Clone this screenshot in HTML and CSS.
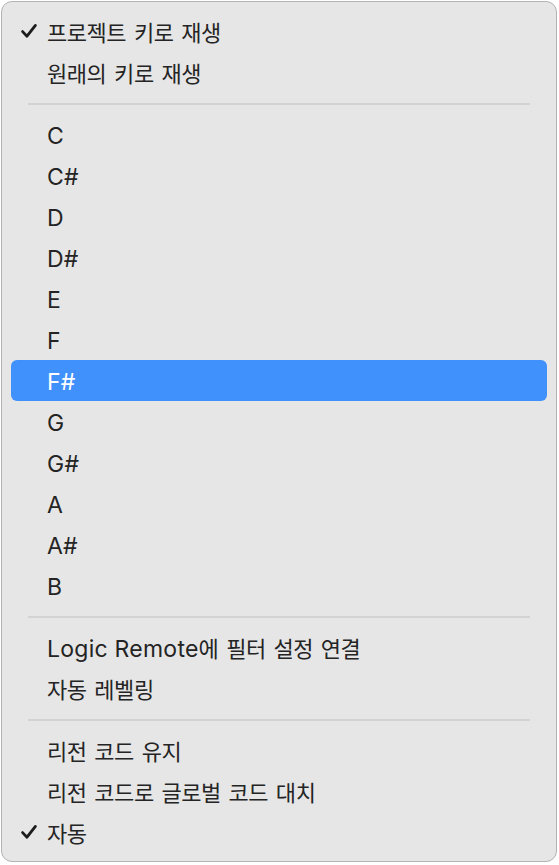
FILE: index.html
```html
<html>
<head>
  <title>키 메뉴</title>
  <link rel="stylesheet" href="styles.css">
</head>
<body>

<div id="menu">
  <div class="item checked">
    <svg class="check" viewBox="0 0 16 14"><path d="M1.6 7.6 L6 12.2 L14.4 1.4"/></svg>
    <span>프로젝트 키로 재생</span>
  </div>
  <div class="item"><span>원래의 키로 재생</span></div>

  <div class="sep"></div>

  <div class="item"><span class="lat">C</span></div>
  <div class="item"><span class="lat">C#</span></div>
  <div class="item"><span class="lat">D</span></div>
  <div class="item"><span class="lat">D#</span></div>
  <div class="item"><span class="lat">E</span></div>
  <div class="item"><span class="lat">F</span></div>
  <div class="item selected"><span class="lat">F#</span></div>
  <div class="item"><span class="lat">G</span></div>
  <div class="item"><span class="lat">G#</span></div>
  <div class="item"><span class="lat">A</span></div>
  <div class="item"><span class="lat">A#</span></div>
  <div class="item"><span class="lat">B</span></div>

  <div class="sep"></div>

  <div class="item"><span><span class="lat">Logic Remote</span>에 필터 설정 연결</span></div>
  <div class="item"><span>자동 레벨링</span></div>

  <div class="sep"></div>

  <div class="item"><span>리전 코드 유지</span></div>
  <div class="item"><span>리전 코드로 글로벌 코드 대치</span></div>
  <div class="item checked">
    <svg class="check" viewBox="0 0 16 14"><path d="M1.6 7.6 L6 12.2 L14.4 1.4"/></svg>
    <span>자동</span>
  </div>
</div>

</body>
</html>
```
FILE: styles.css
```css
body {
  margin: 0;
  background: #fff;
  font-family: Inter, "Noto Sans CJK KR", sans-serif;
}

#menu {
  margin: 1px 2px 0 1px;
  height: 861px;
  box-sizing: border-box;
  padding: 9px 9px 0 9px;
  background: #e6e6e6;
  border: 1px solid #b3b3b3;
  border-radius: 11px;
}

.item {
  position: relative;
  height: 41px;
  box-sizing: border-box;
  padding-bottom: 2px;
  display: flex;
  align-items: center;
  padding-left: 36px;
  font-size: 22px;
  letter-spacing: -0.45px;
  word-spacing: 2px;
  color: #242424;
  border-radius: 6px;
}

.lat {
  font-size: 23px;
  letter-spacing: 0.25px;
  word-spacing: 0;
}
.item > .lat {
  margin-top: 4px;
}

.item.selected {
  background: #4191fc;
  color: #fff;
}

.check {
  position: absolute;
  left: 10px;
  top: 13px;
  width: 16px;
  height: 14px;
  overflow: visible;
}
.check path {
  fill: none;
  stroke: #1c1c1c;
  stroke-width: 2.8;
  stroke-linecap: round;
  stroke-linejoin: round;
}

.sep {
  height: 21px;
  display: flex;
  align-items: center;
  padding: 0 17px;
}
.sep::before {
  content: "";
  flex: 1;
  height: 2px;
  background: #d3d3d3;
}
```
